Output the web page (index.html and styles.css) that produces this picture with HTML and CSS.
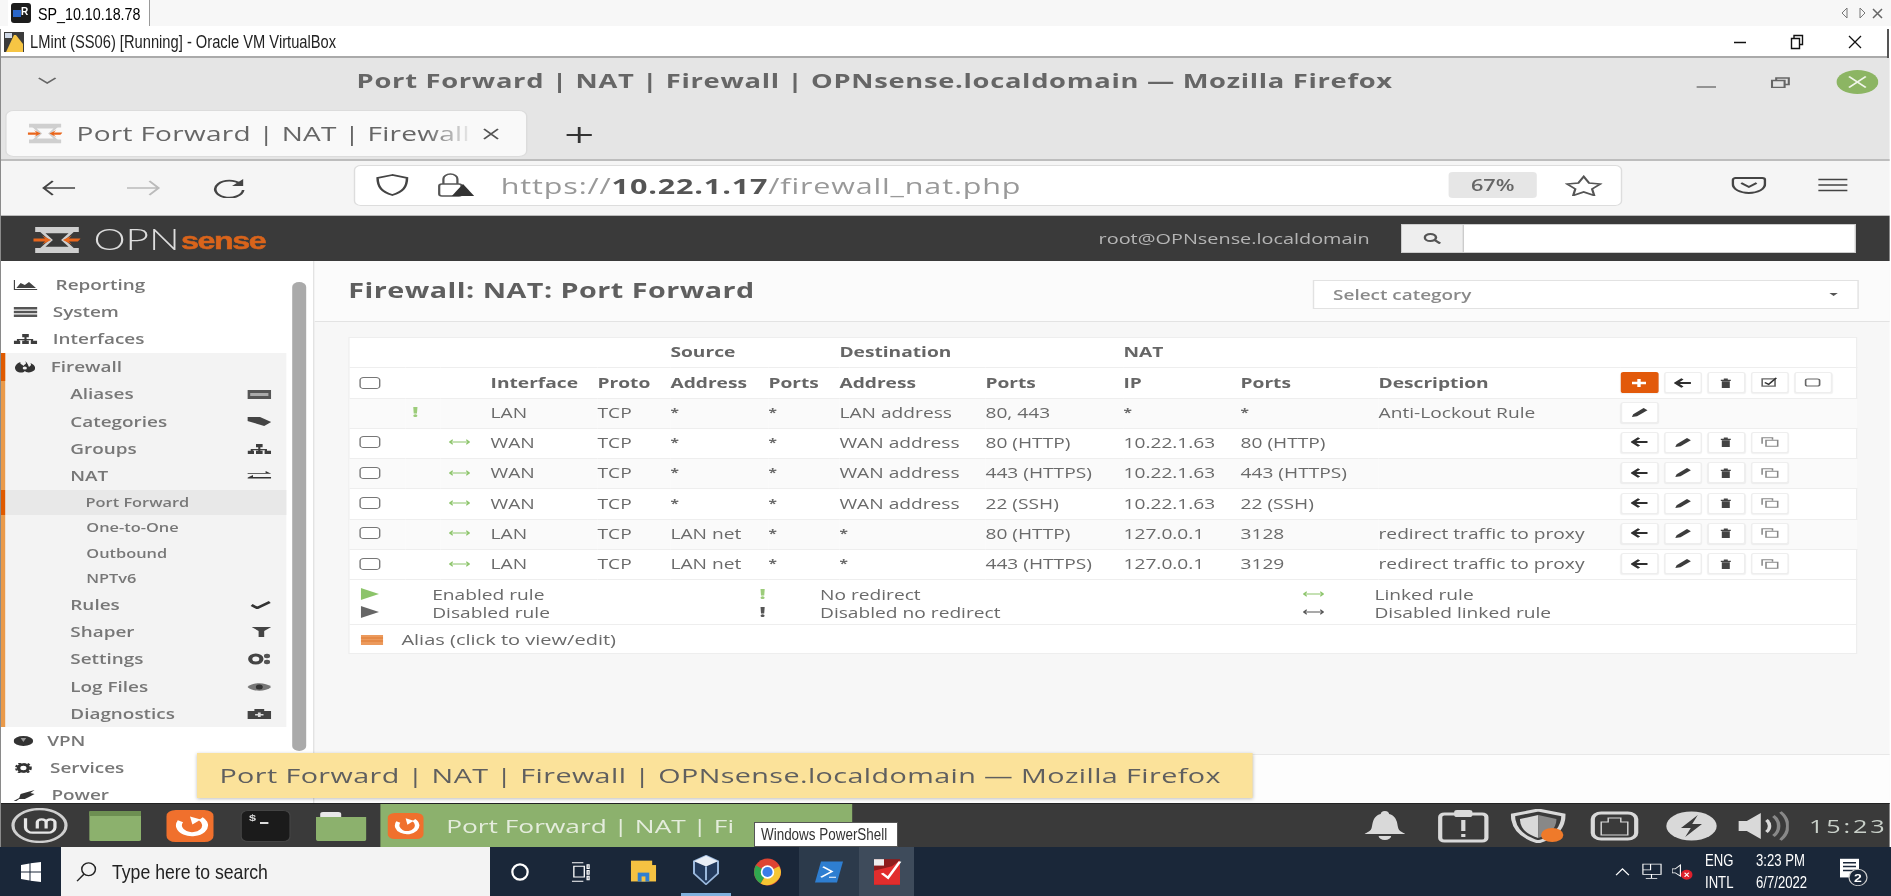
FILE: index.html
```html
<!DOCTYPE html>
<html lang="en">
<head>
<meta charset="utf-8">
<title>Port Forward | NAT | Firewall</title>
<link rel="stylesheet" href="styles.css">
</head>
<body>
<svg class="defs" width="0" height="0">
  <symbol id="opn" viewBox="0 0 48 28" preserveAspectRatio="none">
    <path d="M2 1h44v5H2zM2 22h44v5H2z" fill="#cfcfcf"/>
    <path d="M9 6h30l-9 8 9 8H9l9-8z" fill="none" stroke="#cfcfcf" stroke-width="2.5"/>
    <path d="M0 12.5h12l-3-3 9 4.500-9 4.500 3-3H0zM48 12.500H36l3-3-9 4.500 9 4.500-3-3h9z" fill="#e9661c"/>
  </symbol>
  <symbol id="a-left" viewBox="0 0 14 12" preserveAspectRatio="none"><path d="M6.500 1 1.500 6l5 5M2 6h11" fill="none" stroke="#2f2f2f" stroke-width="2.400"/></symbol>
  <symbol id="a-pen" viewBox="0 0 14 12" preserveAspectRatio="none"><path d="M1 11l1-3 8-7 3 2.500-8 6.500z" fill="#3c3c3c"/></symbol>
  <symbol id="a-trash" viewBox="0 0 14 12" preserveAspectRatio="none"><path d="M2 2h10v1.500H2zM5 .5h4V2H5zM3 4h8v8H3z" fill="#444"/></symbol>
  <symbol id="a-copy" viewBox="0 0 14 12" preserveAspectRatio="none"><path d="M1 8V1h8v2M4 4h9v7H4z" fill="none" stroke="#888" stroke-width="1.200"/></symbol>
  <symbol id="a-link" viewBox="0 0 28 8" preserveAspectRatio="none"><path d="M1 4h26M5 1 1 4l4 3M23 1l4 3-4 3" fill="none" stroke="currentColor" stroke-width="1.500"/></symbol>
  <symbol id="s-sitemap" viewBox="0 0 18 12" preserveAspectRatio="none"><path d="M6.500 0h5v4h-5zM0 8h5v4H0zM6.500 8h5v4h-5zM13 8h5v4h-5zM8.200 4h1.600v2h5v2h-1.600V7.500H9.800V8H8.200v-.5H4.100V8H2.500V6h5.700z" fill="#3e3e3e"/></symbol>
  <symbol id="ff" viewBox="0 0 40 40" preserveAspectRatio="none">
    <rect width="40" height="40" rx="8" fill="#f0702d"/>
    <path d="M12 14a11 11 0 1 0 17-3" fill="none" stroke="#fff" stroke-width="5"/>
    <path d="M20 8l9 4-7 6z" fill="#fff"/>
  </symbol>
</svg>

<div class="screen">
  <div class="rdp-bar">
    <div class="rdp-tab">
      <svg width="20" height="20" viewBox="0 0 20 20"><rect width="20" height="20" rx="3" fill="#1c1c1c"/><rect x="2" y="7" width="8" height="7" fill="#2a66c8"/><text x="10" y="12" class="rdp-r">R</text></svg>
      <span class="narrow">SP_10.10.18.78</span>
    </div>
    <div class="rdp-arrows">
      <svg width="44" height="14" viewBox="0 0 44 14"><path d="M6 2 1 7l5 5zM19 2l5 5-5 5z" fill="none" stroke="#777"/><path d="M32 3l9 9M41 3l-9 9" stroke="#666" stroke-width="1.500"/></svg>
    </div>
  </div>

  <div class="frame">
    <div class="vbox-title">
      <svg width="20" height="20" viewBox="0 0 20 20"><rect width="20" height="20" fill="#3b3b3b"/><path d="M2 20 10 3h2l7 9v8z" fill="#f6c544"/><rect x="1" y="1" width="7" height="5" fill="#cfd8e6"/></svg>
      <span class="vbox-text narrow">LMint (SS06) [Running] - Oracle VM VirtualBox</span>
      <div class="vbox-ctrls">
        <svg width="14" height="14" viewBox="0 0 14 14"><path d="M1 7.500h12" stroke="#111" stroke-width="1.500"/></svg>
        <svg width="14" height="16" viewBox="0 0 14 16"><path d="M1.500 4.500h8v10h-8zM4 4.500V1.500h8.500v9H9.500" fill="none" stroke="#111" stroke-width="1.400"/></svg>
        <svg width="16" height="16" viewBox="0 0 16 16"><path d="M2 2l12 12M14 2 2 14" stroke="#111" stroke-width="1.300"/></svg>
      </div>
    </div>

    <div class="vm">
      <div class="ff-title">
        <svg class="ff-chev" width="14" height="8" viewBox="0 0 14 8"><path d="M1 1l6 5 6-5" fill="none" stroke="#666" stroke-width="1.500"/></svg>
        <div class="ff-title-text">Port Forward | NAT | Firewall | OPNsense.localdomain — Mozilla Firefox</div>
        <div class="ff-ctrls">
          <svg width="14" height="14" viewBox="0 0 14 14"><path d="M0 12h14" stroke="#777" stroke-width="1.500"/></svg>
          <svg width="14" height="11" viewBox="0 0 14 11"><path d="M1 3.500h9v7H1zM4 3.500V1h9v6.500h-3" fill="none" stroke="#666" stroke-width="1.500"/></svg>
          <svg class="ff-close" width="30" height="24" viewBox="0 0 30 24"><ellipse cx="15" cy="12" rx="15" ry="12" fill="#8cb563"/><path d="M9 6.500l12 11M21 6.500l-12 11" stroke="#f0f5ea" stroke-width="1.600"/></svg>
        </div>
      </div>

      <div class="ff-tabs">
        <div class="ff-tab">
          <svg width="25" height="21"><use href="#opn"/></svg>
          <span class="ff-tab-text">Port Forward | NAT | Firewall</span>
          <svg class="ff-tab-x" width="12" height="12" viewBox="0 0 12 12"><path d="M1 1l10 10M11 1 1 11" stroke="#555" stroke-width="1.500"/></svg>
        </div>
        <svg class="ff-plus" width="20" height="20" viewBox="0 0 20 20"><path d="M10 2v16M1 10h18" stroke="#333" stroke-width="2"/></svg>
      </div>

      <div class="ff-nav">
        <svg class="col-back" width="24" height="16" viewBox="0 0 24 16"><path d="M8 1 1.500 8 8 15M2 8h22" fill="none" stroke="#444" stroke-width="1.700"/></svg>
        <svg class="col-fwd" width="24" height="16" viewBox="0 0 24 16"><path d="M16 1l6.500 7L16 15M0 8h22" fill="none" stroke="#bbb" stroke-width="1.700"/></svg>
        <svg class="col-rel" width="24" height="20" viewBox="0 0 24 20"><path d="M20 6A10 8.500 0 1 0 22 12" fill="none" stroke="#444" stroke-width="1.900"/><path d="M22 1v7h-8z" fill="#444"/></svg>
        <div class="url">
          <svg width="25" height="22" viewBox="0 0 25 22"><path d="M12.500 1 2 4c0 9 3 14 10.500 17C20 18 23 13 23 4z" fill="none" stroke="#444" stroke-width="1.800"/></svg>
          <svg class="url-lock" width="26" height="24" viewBox="0 0 26 24"><rect x="1" y="11" width="16" height="12" rx="2" fill="none" stroke="#555" stroke-width="1.600"/><path d="M4 11V6a5 5 0 0 1 10 0v5" fill="none" stroke="#555" stroke-width="1.600"/><path d="M18 11l8 12H10z" fill="#333"/></svg>
          <div class="url-text">https://<b>10.22.1.17</b>/firewall_nat.php</div>
          <div class="url-zoom">67%</div>
          <svg class="url-star" width="27" height="21" viewBox="0 0 27 21"><path d="M13.500 1.500l3.800 6.500 8 1-5.800 5 1.500 6.500-7.500-3.500-7.500 3.500 1.500-6.500-5.800-5 8-1z" fill="none" stroke="#555" stroke-width="1.600"/></svg>
        </div>
        <svg class="col-pocket" width="25" height="17" viewBox="0 0 25 17"><path d="M3 1h19a2 2 0 0 1 2 2v4c0 5-5 9-11.500 9S1 12 1 7V3a2 2 0 0 1 2-2z" fill="none" stroke="#444" stroke-width="1.800"/><path d="M7 6l5.500 4L18 6" fill="none" stroke="#444" stroke-width="1.800"/></svg>
        <svg class="col-menu" width="21" height="14" viewBox="0 0 21 14"><path d="M0 1.500h21M0 7h21M0 12.500h21" stroke="#444" stroke-width="1.500"/></svg>
      </div>

      <div class="opn-head">
        <div class="opn-logo">
          <svg class="opn-mark" width="34" height="28"><use href="#opn"/></svg>
          <span class="opn-word">OPN</span><span class="opn-sense">sense</span>
        </div>
        <div class="opn-user">root@OPNsense.localdomain</div>
        <div class="opn-search">
          <div class="opn-addon"><svg width="13" height="11" viewBox="0 0 13 11"><ellipse cx="5" cy="4.500" rx="4" ry="3.500" fill="none" stroke="#555" stroke-width="1.800"/><path d="M8 7l4 3.500" stroke="#555" stroke-width="2"/></svg></div>
        </div>
      </div>

      <div class="body-row">
        <nav class="side">
          <a class="item first"><span class="lbl lbl-rep">Lobby</span></a>
          <a class="item"><svg width="17" height="10" viewBox="0 0 17 10" preserveAspectRatio="none"><path d="M0 0h1v9h16v1H0zM2 8l3-5 3 2 3-3 5 6z" fill="#444"/></svg><span class="lbl lbl-rep">Reporting</span></a>
          <a class="item"><svg width="17" height="10" viewBox="0 0 17 10" preserveAspectRatio="none"><path d="M0 0h17v2.500H0zM0 3.700h17v2.600H0zM0 7.500h17V10H0z" fill="#555"/></svg><span class="lbl">System</span></a>
          <a class="item"><svg width="17" height="10"><use href="#s-sitemap"/></svg><span class="lbl">Interfaces</span></a>
          <div class="section">
            <a class="item fw"><svg width="16" height="12" viewBox="0 0 16 12" preserveAspectRatio="none"><path d="M8 0c2 3 0 3-1 5C6 3 4 3 5 1 1 3 0 7 2 10c2 2 5 2 6 0 1 2 5 2 7-1 1-3 0-5-3-7 1 2 0 3-1 4-1-3-1-4-3-6z" fill="#333"/><circle cx="8" cy="7" r="1.500" fill="#f3f3f3"/></svg><span class="lbl">Firewall</span></a>
            <a class="sub"><span>Aliases</span><svg width="17" height="9" viewBox="0 0 17 9" preserveAspectRatio="none"><path d="M0 0h17v9H0z" fill="#555"/><path d="M2 3h13v3H2z" fill="#aaa"/></svg></a>
            <a class="sub"><span>Categories</span><svg width="17" height="9" viewBox="0 0 17 9" preserveAspectRatio="none"><path d="M0 0h9l8 5-5 4-12-5z" fill="#444"/></svg></a>
            <a class="sub"><span>Groups</span><svg width="17" height="10"><use href="#s-sitemap"/></svg></a>
            <a class="sub"><span>NAT</span><svg width="17" height="9" viewBox="0 0 17 9" preserveAspectRatio="none"><path d="M0 2h13V0l4 2.800H0zM17 6H4V4l-4 2.800v.7h17z" fill="#333"/></svg></a>
            <a class="subsub on">Port Forward</a>
            <a class="subsub">One-to-One</a>
            <a class="subsub">Outbound</a>
            <a class="subsub">NPTv6</a>
            <a class="sub"><span>Rules</span><svg width="15" height="8" viewBox="0 0 15 8" preserveAspectRatio="none"><path d="M1 4l4 3 9-6" fill="none" stroke="#333" stroke-width="2.400"/></svg></a>
            <a class="sub"><span>Shaper</span><svg width="14" height="10" viewBox="0 0 14 10" preserveAspectRatio="none"><path d="M0 0h14L9 4v6H5V4z" fill="#444"/></svg></a>
            <a class="sub"><span>Settings</span><svg width="17" height="12" viewBox="0 0 17 12" preserveAspectRatio="none"><circle cx="6" cy="6" r="4" fill="none" stroke="#444" stroke-width="3"/><circle cx="14" cy="3" r="2.200" fill="#555"/><circle cx="14" cy="9" r="2.200" fill="#555"/></svg></a>
            <a class="sub"><span>Log Files</span><svg width="17" height="8" viewBox="0 0 17 8" preserveAspectRatio="none"><path d="M0 4c4-5 13-5 17 0-4 5-13 5-17 0z" fill="#777"/><circle cx="8.500" cy="4" r="2.500" fill="#333"/></svg></a>
            <a class="sub"><span>Diagnostics</span><svg width="17" height="10" viewBox="0 0 17 10" preserveAspectRatio="none"><path d="M0 2h5V0h7v2h5v8H0z" fill="#444"/><path d="M7.500 3.500h2v1.500h2v1.500h-2V8h-2V6.500h-2V5h2z" fill="#ddd"/></svg></a>
          </div>
          <a class="item"><svg width="14" height="10" viewBox="0 0 14 10" preserveAspectRatio="none"><ellipse cx="7" cy="5" rx="7" ry="5" fill="#333"/><path d="M5 2h4L7 6z" fill="#999"/></svg><span class="lbl lbl-vpn">VPN</span></a>
          <a class="item"><svg width="14" height="10" viewBox="0 0 14 10" preserveAspectRatio="none"><circle cx="7" cy="5" r="3.500" fill="none" stroke="#333" stroke-width="2.600"/><circle cx="7" cy="5" r="5.300" fill="none" stroke="#333" stroke-width="1.400" stroke-dasharray="2 1.500"/></svg><span class="lbl lbl-svc">Services</span></a>
          <a class="item"><svg width="16" height="11" viewBox="0 0 16 11" preserveAspectRatio="none"><path d="M0 11l4-3 1-4 5-2 5-2-3 3 3 1-4 3-3 2-4 0-3 3z" fill="#333"/></svg><span class="lbl">Power</span></a>
        </nav>
        <div class="gutter"><div class="thumb"></div></div>

        <main class="main">
          <header class="page-head">
            <h1>Firewall: NAT: Port Forward</h1>
            <div class="select"><span>Select category</span><i class="caret"></i></div>
          </header>
          <section class="content">
            <div class="card">
              <table>
                <colgroup><col><col><col><col><col><col><col><col><col><col><col><col><col></colgroup>
                <thead>
                  <tr class="h1"><th colspan="5"></th><th colspan="2">Source</th><th colspan="2">Destination</th><th colspan="4">NAT</th></tr>
                  <tr class="h2">
                    <th><i class="cb"></i></th><th></th><th></th><th>Interface</th><th>Proto</th><th>Address</th><th>Ports</th><th>Address</th><th>Ports</th><th>IP</th><th>Ports</th><th>Description</th>
                    <th><div class="acts">
                      <a class="btn prim"><svg width="12" height="10" viewBox="0 0 12 10"><path d="M6 1v8M1 5h10" stroke="#fff" stroke-width="2.400"/></svg></a>
                      <a class="btn"><svg width="13" height="10"><use href="#a-left"/></svg></a>
                      <a class="btn"><svg width="10" height="10"><use href="#a-trash"/></svg></a>
                      <a class="btn"><svg width="13" height="11" viewBox="0 0 14 12"><path d="M1 2h10v8H1z" fill="none" stroke="#666" stroke-width="1.300"/><path d="M3 6l3 2 6-7" fill="none" stroke="#333" stroke-width="1.500"/></svg></a>
                      <a class="btn"><svg width="12" height="9" viewBox="0 0 12 9"><rect x="1" y="1" width="10" height="7" rx="1.500" fill="none" stroke="#666" stroke-width="1.200"/></svg></a>
                    </div></th>
                  </tr>
                </thead>
                <tbody>
                  <tr><td></td><td><i class="bang">!</i></td><td></td><td>LAN</td><td>TCP</td><td class="st">*</td><td class="st">*</td><td>LAN address</td><td>80, 443</td><td class="st">*</td><td class="st">*</td><td>Anti-Lockout Rule</td>
                    <td><div class="acts"><a class="btn"><svg width="13" height="11"><use href="#a-pen"/></svg></a></div></td></tr>
                  <tr><td><i class="cb"></i></td><td></td><td><svg class="lk" width="15" height="6"><use href="#a-link"/></svg></td><td>WAN</td><td>TCP</td><td class="st">*</td><td class="st">*</td><td>WAN address</td><td>80 (HTTP)</td><td>10.22.1.63</td><td>80 (HTTP)</td><td></td>
                    <td><div class="acts"><a class="btn"><svg width="13" height="10"><use href="#a-left"/></svg></a><a class="btn"><svg width="13" height="11"><use href="#a-pen"/></svg></a><a class="btn"><svg width="10" height="10"><use href="#a-trash"/></svg></a><a class="btn"><svg width="13" height="10"><use href="#a-copy"/></svg></a></div></td></tr>
                  <tr><td><i class="cb"></i></td><td></td><td><svg class="lk" width="15" height="6"><use href="#a-link"/></svg></td><td>WAN</td><td>TCP</td><td class="st">*</td><td class="st">*</td><td>WAN address</td><td>443 (HTTPS)</td><td>10.22.1.63</td><td>443 (HTTPS)</td><td></td>
                    <td><div class="acts"><a class="btn"><svg width="13" height="10"><use href="#a-left"/></svg></a><a class="btn"><svg width="13" height="11"><use href="#a-pen"/></svg></a><a class="btn"><svg width="10" height="10"><use href="#a-trash"/></svg></a><a class="btn"><svg width="13" height="10"><use href="#a-copy"/></svg></a></div></td></tr>
                  <tr><td><i class="cb"></i></td><td></td><td><svg class="lk" width="15" height="6"><use href="#a-link"/></svg></td><td>WAN</td><td>TCP</td><td class="st">*</td><td class="st">*</td><td>WAN address</td><td>22 (SSH)</td><td>10.22.1.63</td><td>22 (SSH)</td><td></td>
                    <td><div class="acts"><a class="btn"><svg width="13" height="10"><use href="#a-left"/></svg></a><a class="btn"><svg width="13" height="11"><use href="#a-pen"/></svg></a><a class="btn"><svg width="10" height="10"><use href="#a-trash"/></svg></a><a class="btn"><svg width="13" height="10"><use href="#a-copy"/></svg></a></div></td></tr>
                  <tr><td><i class="cb"></i></td><td></td><td><svg class="lk" width="15" height="6"><use href="#a-link"/></svg></td><td>LAN</td><td>TCP</td><td>LAN net</td><td class="st">*</td><td class="st">*</td><td>80 (HTTP)</td><td>127.0.0.1</td><td>3128</td><td>redirect traffic to proxy</td>
                    <td><div class="acts"><a class="btn"><svg width="13" height="10"><use href="#a-left"/></svg></a><a class="btn"><svg width="13" height="11"><use href="#a-pen"/></svg></a><a class="btn"><svg width="10" height="10"><use href="#a-trash"/></svg></a><a class="btn"><svg width="13" height="10"><use href="#a-copy"/></svg></a></div></td></tr>
                  <tr><td><i class="cb"></i></td><td></td><td><svg class="lk" width="15" height="6"><use href="#a-link"/></svg></td><td>LAN</td><td>TCP</td><td>LAN net</td><td class="st">*</td><td class="st">*</td><td>443 (HTTPS)</td><td>127.0.0.1</td><td>3129</td><td>redirect traffic to proxy</td>
                    <td><div class="acts"><a class="btn"><svg width="13" height="10"><use href="#a-left"/></svg></a><a class="btn"><svg width="13" height="11"><use href="#a-pen"/></svg></a><a class="btn"><svg width="10" height="10"><use href="#a-trash"/></svg></a><a class="btn"><svg width="13" height="10"><use href="#a-copy"/></svg></a></div></td></tr>
                </tbody>
              </table>
              <div class="legend">
                <svg width="13" height="12" viewBox="0 0 13 12"><path d="M0 0l13 6-13 6z" fill="#8cc46a"/></svg><span>Enabled rule</span>
                <i class="bang">!</i><span>No redirect</span>
                <svg class="lk" width="15" height="6"><use href="#a-link"/></svg><span>Linked rule</span>
                <svg width="13" height="12" viewBox="0 0 13 12"><path d="M0 0l13 6-13 6z" fill="#666"/></svg><span>Disabled rule</span>
                <i class="bang off">!</i><span>Disabled no redirect</span>
                <svg class="lk off" width="15" height="6"><use href="#a-link"/></svg><span>Disabled linked rule</span>
              </div>
              <div class="alias">
                <svg width="16" height="10" viewBox="0 0 16 10"><path d="M0 0h16v10H0z" fill="#ec9a5c"/><path d="M0 3h16M0 6h16" stroke="#dd7a33"/></svg>
                <span>Alias (click to view/edit)</span>
              </div>
            </div>
          </section>
          <footer class="foot"></footer>
        </main>
      </div>

      <div class="panel">
        <svg class="p-mint" width="41" height="35" viewBox="0 0 39 34" preserveAspectRatio="none"><ellipse cx="19.500" cy="17" rx="18" ry="16" fill="none" stroke="#cfcfcf" stroke-width="2.200"/><path d="M10 10v9a5 5 0 0 0 5 5h10a5 5 0 0 0 5-5v-5a3 3 0 0 0-6 0v6M18 20v-6a3 3 0 0 1 6 0" fill="none" stroke="#e6e6e6" stroke-width="2.200"/></svg>
        <svg class="p-win" width="37" height="30" viewBox="0 0 37 30"><rect width="37" height="30" rx="1.500" fill="#8cb16d"/><rect width="37" height="5" fill="#6d8f52"/></svg>
        <svg class="p-ff" width="34" height="32"><use href="#ff"/></svg>
        <svg class="p-term" width="36" height="32" viewBox="0 0 36 32"><rect x=".5" y=".5" width="35" height="31" rx="5" fill="#1b1b1b" stroke="#444"/><path d="M14 13h6" stroke="#ddd" stroke-width="2"/><text x="6" y="11" class="term-s">$</text></svg>
        <svg class="p-folder" width="36" height="30" viewBox="0 0 36 30"><path d="M0 6h36v22a2 2 0 0 1-2 2H2a2 2 0 0 1-2-2z" fill="#8cb16d"/><path d="M3 6V3a2 2 0 0 1 2-2h11a2 2 0 0 1 2 2v3z" fill="#e8e8e8"/></svg>
        <div class="p-task">
          <svg width="26" height="26"><use href="#ff"/></svg>
          <span>Port Forward | NAT | Fi</span>
        </div>
        <div class="p-tray">
          <svg width="31" height="32" viewBox="0 0 31 32"><path d="M15.500 1c-2 0-3 1.500-3 3C7 6 7 12 6 18c-.5 3-3 4-5 6h29c-2-2-4.500-3-5-6-1-6-1-12-6.500-14 0-1.500-1-3-3-3zM11 26h9a4.500 4 0 0 1-9 0z" fill="#d9d9d9"/></svg>
          <svg class="t1" width="37" height="34" viewBox="0 0 37 34"><rect x="2" y="5" width="33" height="27" rx="3" fill="none" stroke="#d9d9d9" stroke-width="3"/><rect x="12" y="1" width="13" height="7" rx="2" fill="#d9d9d9"/><path d="M18.500 11v11M18.500 25v3" stroke="#d9d9d9" stroke-width="3"/></svg>
          <svg width="40" height="34" viewBox="0 0 40 34"><path d="M20 1 2 6c0 13 6 22 18 27 12-5 18-14 18-27z" fill="none" stroke="#d9d9d9" stroke-width="3"/><path d="M20 6 7 10c0 9 4 15 13 19z" fill="#d9d9d9"/><path d="M20 6l13 4c0 9-4 15-13 19z" fill="#888"/><ellipse cx="30" cy="26" rx="8" ry="7" fill="#ef7a2a"/></svg>
          <svg class="t2" width="35" height="30" viewBox="0 0 35 30"><path d="M8 2h19a6 6 0 0 1 6 6v14a6 6 0 0 1-6 6H8a6 6 0 0 1-6-6V8a6 6 0 0 1 6-6z" fill="none" stroke="#d9d9d9" stroke-width="3"/><path d="M8 24V11h5V7h9v4h5v13z" fill="none" stroke="#d9d9d9" stroke-width="1"/></svg>
          <svg class="t3" width="37" height="30" viewBox="0 0 37 30"><ellipse cx="18.500" cy="15" rx="18" ry="14.500" fill="#d9d9d9"/><path d="M23 4 11 17h7l-4 9 12-13h-7z" fill="#3b3b3b"/></svg>
          <svg width="36" height="30" viewBox="0 0 36 30"><path d="M0 10h6l10-8v26L6 20H0z" fill="#d9d9d9"/><path d="M20 9c3 3 3 9 0 12" fill="none" stroke="#d9d9d9" stroke-width="2.500"/><path d="M25 5c5 5 5 15 0 20M30 1c7 8 7 20 0 28" fill="none" stroke="#888" stroke-width="2.500"/></svg>
          <span class="p-clock">15:23</span>
        </div>
      </div>

      <div class="tip-title">Port Forward | NAT | Firewall | OPNsense.localdomain — Mozilla Firefox</div>
    </div>
  </div>

  <div class="win-bar">
    <div class="w-start"><svg width="20" height="20" viewBox="0 0 20 20"><path d="M0 3l8.500-1.500V9.500H0zM9.500 1.300 20 0v9.500H9.500zM0 10.500h8.500v8L0 17zM9.500 10.500H20V20L9.500 18.700z" fill="#fff"/></svg></div>
    <div class="w-search">
      <svg width="21" height="20" viewBox="0 0 20 22" preserveAspectRatio="none"><ellipse cx="12" cy="8" rx="6.500" ry="7" fill="none" stroke="#222" stroke-width="1.400"/><path d="M7.500 13.500 1 21" stroke="#222" stroke-width="1.400"/></svg>
      <span class="narrow">Type here to search</span>
    </div>
    <div class="w-app"><svg width="18" height="18" viewBox="0 0 20 20"><circle cx="10" cy="10" r="8.500" fill="none" stroke="#fff" stroke-width="2.500"/></svg></div>
    <div class="w-app"><svg width="19" height="20" viewBox="0 0 20 28" preserveAspectRatio="none"><path d="M1 1h12M1 27h12M3 6h11v15H3zM17 4h2v5h-2zM17 12h2v5h-2zM17 20h2v5h-2z" fill="none" stroke="#fff" stroke-width="1.400"/></svg></div>
    <div class="w-app w-exp"><svg width="27" height="24" viewBox="0 0 28 38" preserveAspectRatio="none"><path d="M1 1h22v10H1z" fill="#f5c242"/><path d="M1 8h26v26H1z" fill="#f5c242"/><path d="M8 20h12v14H8z" fill="#2f7fd1"/><path d="M12 26h4v8h-4z" fill="#f5c242"/></svg></div>
    <div class="w-app w-on"><svg width="26" height="30" viewBox="0 0 26 44" preserveAspectRatio="none"><path d="M13 1 25 9v18L13 43 1 27V9z" fill="#233a5c" stroke="#9ab8dd" stroke-width="2"/><path d="M13 1 25 9 13 17 1 9z" fill="#e9eef6"/><path d="M13 17v20" stroke="#9ab8dd" stroke-width="2"/></svg></div>
    <div class="w-app w-chr"><svg width="27" height="28" viewBox="0 0 28 28"><circle cx="14" cy="14" r="14" fill="#de4433"/><path d="M14 14 2 7a14 14 0 0 0 5 19z" fill="#2fa84f"/><path d="M14 14 7 26c8 5 21-2 21-12 0-2-1-4-2-6z" fill="#f6c633"/><circle cx="14" cy="14" r="7" fill="#fff"/><circle cx="14" cy="14" r="5.300" fill="#3b7de8"/></svg></div>
    <div class="w-app w-ps"><svg width="28" height="22" viewBox="0 0 28 42" preserveAspectRatio="none"><path d="M6 1h22l-6 40H0z" fill="#2e7ed1"/><path d="M8 11l9 9-11 11M14 31h7" fill="none" stroke="#fff" stroke-width="2.200"/></svg></div>
    <div class="w-app w-act"><svg width="30" height="28" viewBox="0 0 30 48" preserveAspectRatio="none"><rect x="2" y="2" width="26" height="44" fill="#8e1c1c"/><path d="M2 22 20 14l8-10v42H2z" fill="#e22d2d"/><path d="M10 26l6 8L28 6" fill="none" stroke="#fff" stroke-width="3"/><rect x="2" y="2" width="10" height="11" fill="#eee"/></svg></div>
    <div class="w-tray">
      <svg width="15" height="8" viewBox="0 0 14 9" preserveAspectRatio="none"><path d="M1 8l6-7 6 7" fill="none" stroke="#fff" stroke-width="1.200"/></svg>
      <svg class="t-net" width="21" height="17" viewBox="0 0 22 30" preserveAspectRatio="none"><path d="M2 2h19v18H2zM2 2h8v10H2zM11 20v7M5 27h12" fill="none" stroke="#fff" stroke-width="1.200"/></svg>
      <svg class="t-vol" width="21" height="17" viewBox="0 0 20 26" preserveAspectRatio="none"><path d="M0 9h3l5-6v17l-5-5H0z" fill="none" stroke="#fff" stroke-width="1.100"/><ellipse cx="14" cy="18" rx="5.500" ry="7.500" fill="#e0202c"/><path d="M12 15l4 6M16 15l-4 6" stroke="#fff" stroke-width="1.300"/></svg>
      <div class="t-col"><span>ENG</span><span>INTL</span></div>
      <div class="t-col t-time"><span>3:23 PM</span><span>6/7/2022</span></div>
      <svg class="t-note" width="30" height="28" viewBox="0 0 30 36" preserveAspectRatio="none"><path d="M2 1h19v24H2z" fill="#fff"/><path d="M5 6h13M5 11h13M5 16h13" stroke="#1a2739" stroke-width="2"/><ellipse cx="20" cy="25" rx="9" ry="10.500" fill="#1a2739" stroke="#ccc" stroke-width="1.200"/><text x="16" y="31" class="t-2">2</text></svg>
    </div>
  </div>

  <div class="tip-ps"><span class="narrow">Windows PowerShell</span></div>
</div>
</body>
</html>
```
FILE: styles.css
```css
* { box-sizing: border-box; }
html, body { margin: 0; padding: 0; width: 1891px; height: 896px; overflow: hidden; background: #fff; }
a { display: block; }
svg { display: block; flex: none; }
.defs { position: absolute; }

.screen { position: relative; width: 1891px; height: 896px; overflow: hidden; filter: blur(.65px); font-family: "Liberation Sans", sans-serif; }
/* Windows host text is a condensed face: narrow the sans to suit */
.narrow { display: inline-block; transform: scaleX(.84); transform-origin: left center; white-space: nowrap; }

/* remote desktop tab bar */
.rdp-bar { height: 26px; background: #f7f7f7; display: flex; align-items: center; justify-content: space-between; padding: 0 6px 0 8px; }
.rdp-tab { height: 26px; width: 142px; padding: 3px 0 0 3px; display: flex; gap: 7px; background: #fff; border-right: 1px solid #999; font-size: 17px; color: #000; align-items: center; }
.rdp-tab svg { margin-top: -3px; }
.rdp-r { font: bold 10px "Liberation Sans", sans-serif; fill: #fff; }

.frame { margin-top: 3px; width: 1889px; border-left: 1px solid #8a8a8a; border-right: 2px solid #555; height: 818px; }
.vbox-title { height: 29px; background: #fff; border-bottom: 2px solid #aaa; display: flex; align-items: center; padding: 0 24px 1px 3px; }
.vbox-text { margin-left: 6px; font-size: 17.500px; color: #222; }
.vbox-ctrls { margin-left: auto; display: flex; align-items: center; gap: 43px; }

/* the guest screen is horizontally stretched */
.vm { position: relative; width: 1348.500px; height: 789px; transform: scaleX(1.4); transform-origin: left top; font-family: "Open Sans", "Noto Sans", sans-serif; color: #707070; overflow: visible; }

.ff-title { height: 52px; background: #e5e5e5; display: flex; align-items: flex-start; padding-top: 12px; }
.ff-chev { margin: 7px 0 0 26px; }
.ff-title-text { margin-left: 214px; width: 742px; font-size: 19.500px; letter-spacing: .5px; font-weight: 700; color: #666; line-height: 22px; white-space: nowrap; }
.ff-ctrls { display: flex; align-items: center; gap: 39px; margin-left: 215px; }
.ff-close { margin-left: -6px; }

.ff-tabs { height: 51px; background: #e5e5e5; border-bottom: 2px solid #bdbdbd; display: flex; align-items: flex-start; }
.ff-tab { margin-left: 3px; width: 373px; height: 47px; background: #f9f9f9; border: 1px solid #dcdcdc; border-radius: 6px; display: flex; align-items: center; padding-left: 15px; }
.ff-tab-text { margin-left: 10px; width: 284px; font-size: 20px; letter-spacing: .2px; color: #666; white-space: nowrap; overflow: hidden; -webkit-mask-image: linear-gradient(90deg, #000 88%, transparent 100%); mask-image: linear-gradient(90deg, #000 88%, transparent 100%); }
.ff-tab-x { margin-left: 6px; }
.ff-plus { margin: 15px 0 0 27px; }

.ff-nav { height: 55px; background: #f5f5f5; display: grid; grid-template-columns: 29px 24px 37px 24px 37px 24px 77px 906px 78px 25px 37px 21px; align-items: center; border-bottom: 1px solid #bbb; }
.col-back { grid-column: 2; }
.col-fwd { grid-column: 4; }
.col-rel { grid-column: 6; }
.url { grid-column: 8; height: 41px; margin-top: -6px; background: #fff; border: 1px solid #ddd; border-radius: 5px; display: flex; align-items: center; padding: 0 13px 0 14px; }
.url-lock { margin-left: 20px; }
.url-text { margin-left: 19px; flex: 1; font-size: 21.800px; letter-spacing: .6px; color: #999; white-space: nowrap; }
.url-text b { color: #555; font-weight: 700; }
.url-zoom { width: 63px; height: 26px; background: #e6e6e6; border-radius: 3px; text-align: center; font-size: 15.500px; font-weight: 600; line-height: 26px; color: #666; }
.url-star { margin-left: 20px; }
.col-pocket { grid-column: 10; margin-top: -6px; }
.col-menu { grid-column: 12; margin-top: -6px; }

.opn-head { height: 45px; background: #3a3a3a; display: flex; align-items: center; padding-left: 24px; }
.opn-logo { width: 760px; display: flex; align-items: flex-end; height: 30px; }
.opn-mark { margin-left: -1px; }
.opn-word { margin-left: 9px; font-family: "Lato", sans-serif; font-weight: 300; font-size: 29px; line-height: 30px; color: #ddd; }
.opn-sense { margin-left: 1px; font-family: "Liberation Sans", sans-serif; font-weight: 700; font-size: 23px; line-height: 25px; color: #d9641b; letter-spacing: -1px; -webkit-text-stroke: .5px #d9641b; }
.opn-user { width: 216px; font-size: 14.200px; color: #b5b5b5; white-space: nowrap; }
.opn-search { width: 325px; height: 29px; background: #fff; border: 1px solid #ccc; }
.opn-addon { width: 44px; height: 100%; background: #eee; border-right: 1px solid #ccc; display: flex; align-items: center; justify-content: center; }

.body-row { height: 542px; display: flex; background: #fff; }
.side { width: 204px; flex: none; overflow: hidden; font-size: 13.500px; line-height: 16px; font-weight: 600; color: #777; }
.item { height: 27.200px; display: flex; align-items: center; padding-left: 9px; white-space: nowrap; }
.first { margin-top: -16.800px; }
.first .lbl { position: relative; top: -5px; }
.lbl { margin-left: 11px; }
.lbl-rep { margin-left: 13px; }
.lbl-vpn { margin-left: 10px; }
.lbl-svc { margin-left: 12px; }
.section { background: #f3f3f3; border-left: 3.500px solid #ea9a4a; }
.fw { position: relative; margin-left: -3.500px; padding-left: 9px; border-left: 3.500px solid #df5a00; height: 27.800px; }
.fw svg { margin-left: -3px; }
.sub { height: 27.200px; display: flex; align-items: center; justify-content: space-between; padding: 0 11px 0 46.500px; }
.subsub { height: 25.500px; line-height: 25.500px; padding-left: 57.900px; font-size: 11.700px; }
.subsub.on { margin-left: -3.500px; border-left: 3.500px solid #df5a00; background: #e8e8e8; }

.gutter { width: 20px; flex: none; padding: 21px 0 0 4px; border-right: 1.500px solid #ddd; }
.thumb { width: 10px; height: 469px; background: #aaa; border-radius: 5px; }

.main { flex: 1; display: flex; flex-direction: column; background: #f7f7f7; }
.page-head { height: 61px; flex: none; background: #fbfbfb; border-bottom: 1px solid #e3e3e3; display: flex; justify-content: space-between; padding: 18px 22px 0 24px; }
.page-head h1 { margin: 0; font-size: 20.500px; letter-spacing: .35px; font-weight: 700; line-height: 22px; color: #5f5f5f; }
.select { width: 390px; height: 29px; margin-top: 1px; background: #fff; border: 1px solid #e2e2e2; display: flex; justify-content: space-between; align-items: center; padding: 0 14px; font-size: 13.500px; font-weight: 600; color: #8a8a8a; }
.caret { border: 3px solid transparent; border-top-color: #555; border-bottom: 0; }
.content { flex: 1; padding: 15px 22px 0 24px; }
.card { width: 1078px; height: 317px; background: #fff; border: 1px solid #eee; }
table { width: 1077px; border-collapse: collapse; table-layout: fixed; font-size: 13.700px; font-weight: 500; color: #6a6a6a; margin-top: -1px; }
col:nth-child(1) { width: 40px; }
col:nth-child(2) { width: 25px; }
col:nth-child(3) { width: 35.700px; }
col:nth-child(4) { width: 76.400px; }
col:nth-child(5) { width: 52.100px; }
col:nth-child(6) { width: 70px; }
col:nth-child(7) { width: 50.700px; }
col:nth-child(8) { width: 104.300px; }
col:nth-child(9) { width: 98.600px; }
col:nth-child(10) { width: 83.600px; }
col:nth-child(11) { width: 98.600px; }
col:nth-child(12) { width: 172.900px; }
col:nth-child(13) { width: 169px; }
th, td { padding: 0; text-align: left; white-space: nowrap; font-weight: 500; }
td { padding-bottom: 2px; }
th { font-weight: 700; color: #666; }
.h1 { height: 30px; }
.h2 { height: 31px; border-top: 1px solid #eee; }
tbody tr { height: 30.300px; border-top: 1px solid #eee; }
tbody tr:nth-child(odd) { background: #fafafa; }
tbody { border-bottom: 1px solid #eee; }
td.st { font-weight: 700; font-size: 11px; padding-bottom: 4px; }
.cb { display: block; width: 15px; height: 12px; margin-left: 7px; border: 1.300px solid #777; border-radius: 3px; background: #fff; }
.bang { display: block; font-style: normal; font-weight: 800; font-size: 14px; line-height: 14px; color: #9ccc7a; padding-left: 5px; }
.bang.off { color: #555; }
.lk { color: #8cc46a; margin-left: 6px; }
.lk.off { color: #555; }
.acts { display: flex; gap: 4px; }
.btn { width: 27px; height: 21px; background: #fff; border: 1px solid #eee; border-radius: 2px; display: flex; align-items: center; justify-content: center; box-shadow: 0 1px 1px rgba(0,0,0,.06); }
.prim { background: #e2590a; border-color: #e2590a; }
.legend { display: grid; grid-template-columns: 51px 234px 43px 345px 51px 1fr; grid-auto-rows: 18px; align-items: center; padding: 5px 0 6px 8px; border-bottom: 1px solid #eee; font-size: 13.700px; font-weight: 500; color: #6a6a6a; height: 45px; }
.legend .bang { padding-left: 0; }
.legend .lk { margin-left: 0; }
.alias { height: 29px; display: flex; align-items: center; padding-left: 8px; gap: 13px; font-size: 14.300px; font-weight: 500; color: #6a6a6a; }

.foot { height: 49px; flex: none; background: #fdfdfd; border-top: 1px solid #e8e8e8; }

.panel { height: 44px; background: #3a3a3a; border-top: 1px solid #222; display: flex; align-items: center; padding-left: 7px; }
.p-win { margin-left: 15px; }
.p-ff { margin-left: 18px; }
.p-term { margin-left: 19px; }
.p-folder { margin-left: 18px; }
.p-task { margin-left: 10px; width: 337px; height: 43px; background: #8cb16d; display: flex; align-items: center; padding-left: 5px; gap: 16px; font-size: 18.800px; color: #e4ecdc; white-space: nowrap; overflow: hidden; }
.term-s { font: bold 9px "Liberation Mono", monospace; fill: #ddd; }
.p-tray { margin-left: auto; display: flex; align-items: center; gap: 15px; padding-right: 1px; }
.t1 { margin-left: 7px; }
.t2 { margin-left: 2px; }
.t3 { margin-left: 4px; }
.p-clock { width: 56px; font-size: 18px; letter-spacing: 2px; color: #c9d0c9; white-space: nowrap; }

.tip-title { position: absolute; left: 140px; top: 695px; width: 754px; height: 45px; background: #fbe29a; box-shadow: 0 1px 3px rgba(0,0,0,.25); padding-left: 16px; font-size: 20.500px; letter-spacing: .3px; line-height: 45px; color: #5f5f5f; white-space: nowrap; }

/* windows taskbar */
.win-bar { height: 49px; background: #1a2739; display: flex; align-items: center; color: #fff; }
.w-start { width: 61px; height: 100%; display: flex; align-items: center; justify-content: center; }
.w-search { width: 429px; height: 100%; background: #f3f3f3; display: flex; align-items: center; padding-left: 15px; gap: 15px; font-size: 21px; color: #222; }
.w-app { width: 60px; height: 100%; flex: none; display: flex; align-items: center; justify-content: center; }
.w-exp { margin-left: 3px; }
.w-on { width: 50px; margin-left: 8px; border-bottom: 3px solid #7fb0dd; }
.w-chr { margin-left: 6px; }
.w-ps { margin-left: 2px; background: #2c3a4b; }
.w-act { width: 55px; background: #3e4b5b; }
.w-tray { margin-left: auto; display: flex; align-items: center; padding-right: 23px; font-size: 16px; }
.t-net { margin-left: 11px; }
.t-vol { margin-left: 10px; }
.t-col { margin-left: 12px; width: 29px; display: flex; flex-direction: column; gap: 5px; line-height: 17px; }
.t-col span { display: inline-block; white-space: nowrap; transform: scaleX(.82); transform-origin: left center; }
.t-time { margin-left: 22px; width: 56px; }
.t-note { margin-left: 26px; }
.t-2 { font: bold 14px "Liberation Sans", sans-serif; fill: #fff; }

.tip-ps { position: absolute; left: 754px; top: 822px; width: 144px; height: 25px; background: #fff; border: 1px solid #555; padding-left: 6px; font-size: 16px; line-height: 23px; color: #333; white-space: nowrap; }
```
